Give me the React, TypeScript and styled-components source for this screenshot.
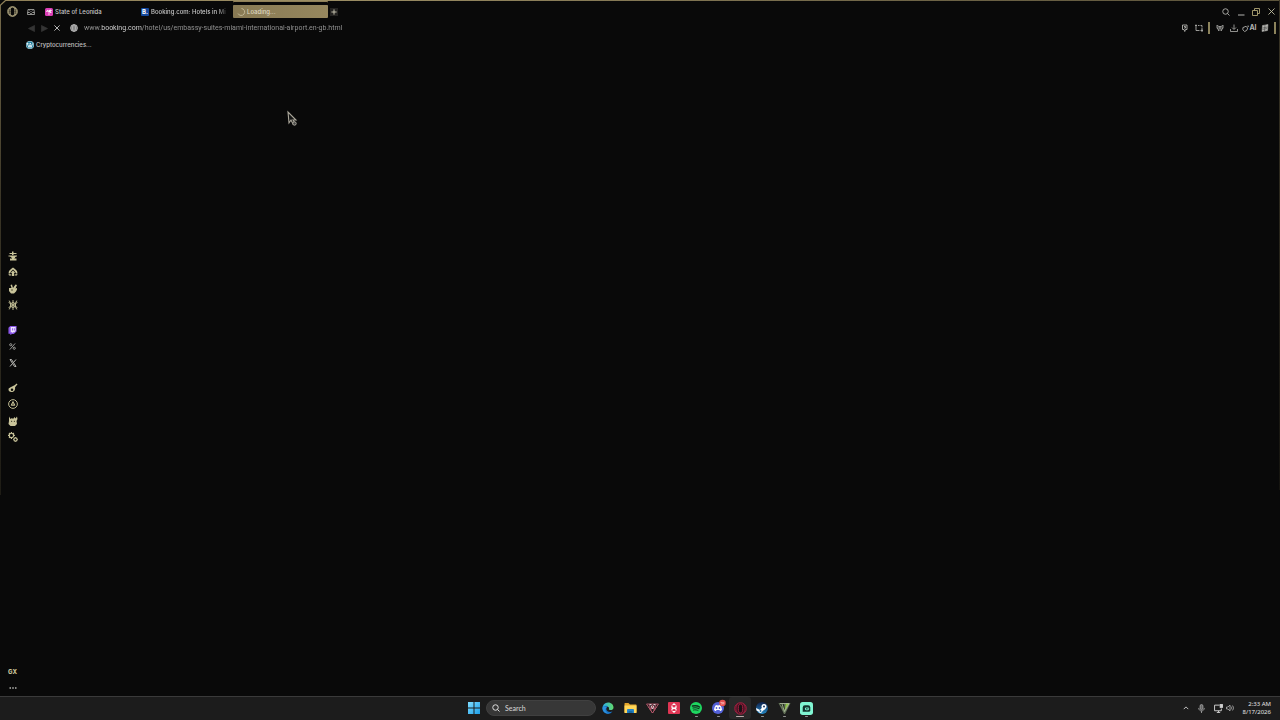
import React from "react";
import styled, { createGlobalStyle, css } from "styled-components";

const gold = "#8f8058";
const cream = "#c9c49a";
const silver = "#b4b4b0";

const GlobalStyle = createGlobalStyle`
  *, *::before, *::after { box-sizing: border-box; }
  html, body { margin: 0; background: #090909; }
  body { font-family: Inter, "Liberation Sans", sans-serif; font-size: 6px; font-weight: 500; line-height: 8px; color: #c8c8c8; }
  button, input { font: inherit; color: inherit; border: 0; padding: 0; margin: 0; background: none; outline-offset: 1px; }
  button { cursor: pointer; }
  svg { display: block; flex: none; overflow: visible; }
`;

const Desktop = styled.div`
  min-height: 100vh;
  display: flex;
  flex-direction: column;
`;

const BrowserWindow = styled.section`
  position: relative;
  flex: 1;
  display: grid;
  grid-template-columns: 25px minmax(0, 1fr);
  background: #090909;
`;

const TopEdge = styled.div`
  position: absolute;
  top: 0;
  left: 5px;
  right: 0;
  height: 1px;
  background: linear-gradient(90deg, #8f8058, #9c8e64 25%, #6f6547 70%, #5c543b);
`;

const LeftEdge = styled.div`
  position: absolute;
  top: 5px;
  left: 0;
  width: 1px;
  height: 490px;
  background: linear-gradient(#766b4b, #3a3526 40%, #1e1c15);
`;

const RightEdge = styled(LeftEdge)`
  top: 0;
  left: auto;
  right: 0;
  background: linear-gradient(#3a3526, #15140f);
`;

const Corner = styled.svg`
  position: absolute;
  top: 0;
  left: 0;
`;

const Sidebar = styled.nav`
  display: grid;
  grid-template-rows: 1fr auto 1fr;
  justify-items: center;
  padding: 5px 0 2px;
`;

const SideApps = styled.div`
  display: flex;
  flex-direction: column;
  gap: 13px;
  padding-bottom: 6px;
`;

const SideGroup = styled.div<{ $short?: boolean }>`
  height: ${(p) => (p.$short ? 45 : 61)}px;
  display: flex;
  flex-direction: column;
  justify-content: space-between;
`;

const SideBottom = styled.div`
  display: flex;
  flex-direction: column;
  gap: 4px;
  align-self: end;
`;

const IconButton = styled.button<{ $tone?: string }>`
  width: 12px;
  height: 12px;
  display: flex;
  align-items: center;
  justify-content: center;
  color: ${(p) => p.$tone ?? silver};
`;

const WideButton = styled(IconButton)`
  width: 15px;
  gap: 0;
  font-size: 7px;
  line-height: 10px;
  font-weight: 700;
`;

const GxButton = styled(IconButton)`
  font-size: 6px;
  font-weight: 800;
`;

const Main = styled.main`
  display: flex;
  flex-direction: column;
  padding-top: 3px;
`;

const TitleBar = styled.header`
  height: 17px;
  display: flex;
  align-items: center;
  padding: 0 3px 0 0;
`;

const TabStrip = styled.div`
  flex: 1;
  min-width: 0;
  display: flex;
  align-items: center;
  gap: 1px;
  margin-left: 4px;
`;

const Tab = styled.button<{ $active?: boolean }>`
  width: 95px;
  height: 13px;
  display: flex;
  align-items: center;
  gap: 2px;
  padding: 0 3px 0 4px;
  border-radius: 1px;
  text-align: left;
  ${(p) =>
    p.$active &&
    css`
      color: #ded8c2;
      background: linear-gradient(90deg, #887a54, #96875e);
      box-shadow: 0 -3px 0 #090909, 0 -4px 0 ${gold};
    `}
`;

const TabTitle = styled.span<{ $fade?: boolean }>`
  flex: 1;
  min-width: 0;
  overflow: hidden;
  white-space: nowrap;
  ${(p) => p.$fade && css`mask-image: linear-gradient(90deg, #000 84%, transparent 100%);`}
`;

const AddTab = styled.button`
  width: 8px;
  height: 8px;
  margin-left: 1px;
  display: grid;
  place-items: center;
  background: #242321;
  color: #d0ccb8;
`;

const Controls = styled.div`
  display: flex;
  gap: 3px;
`;

const Toolbar = styled.div`
  height: 16px;
  display: flex;
  align-items: center;
  padding: 0 2px 0 0;
`;

const NavButtons = styled.div`
  display: flex;
  gap: 1px;
`;

const Address = styled.label`
  flex: 1;
  min-width: 0;
  display: flex;
  align-items: center;
  gap: 6px;
  margin-left: 7px;
`;

const AddressInput = styled.input`
  flex: 1;
  min-width: 0;
  height: 12px;
  font-family: Roboto, "Liberation Sans", sans-serif;
  font-size: 7px;
  font-weight: 400;
  outline: none;
  background: linear-gradient(90deg, #989898 17px, #e0e0e0 17px, #e0e0e0 58px, #989898 58px);
  background-clip: text;
  -webkit-text-fill-color: transparent;
`;

const Tools = styled.div`
  display: flex;
  align-items: center;
  gap: 2px;
`;

const Divider = styled.span`
  width: 2px;
  height: 12px;
  margin: 0 2px 0 1px;
  background: #8c835c;
`;

const Bookmarks = styled.div`
  height: 17px;
  display: flex;
  align-items: center;
  padding-left: 1px;
`;

const Bookmark = styled.a`
  display: flex;
  align-items: center;
  gap: 2px;
  color: #c2c2c2;
  text-decoration: none;
`;

const Taskbar = styled.footer`
  height: 24px;
  flex: none;
  display: grid;
  grid-template-columns: 1fr auto 1fr;
  align-items: center;
  padding-bottom: 1px;
  background: #1c1c1c;
  border-top: 1px solid #3a3a3a;
  font-family: "Noto Sans", "Open Sans", sans-serif;
`;

const TaskItems = styled.div`
  grid-column: 2;
  display: flex;
  align-items: center;
`;

const TaskButton = styled.button<{ $open?: boolean; $active?: boolean }>`
  position: relative;
  width: 22px;
  height: 22px;
  display: grid;
  place-items: center;
  ${(p) =>
    p.$active &&
    css`
      background: #292929;
      border-radius: 3px;
    `}
  ${(p) =>
    p.$open &&
    css`
      &::after {
        content: "";
        position: absolute;
        bottom: 2px;
        left: calc(50% - ${p.$active ? 4 : 1}px);
        width: ${p.$active ? 8 : 3}px;
        height: 1px;
        border-radius: 1px;
        background: ${p.$active ? "#b9a9a9" : "#909090"};
      }
    `}
`;

const SearchBox = styled.label`
  width: 110px;
  height: 16px;
  display: flex;
  align-items: center;
  gap: 5px;
  padding: 0 5px;
  margin: 0 1px;
  border-radius: 8px;
  background: #373737;
  border: 1px solid #404040;
  color: #dedede;
`;

const SearchInput = styled.input`
  flex: 1;
  min-width: 0;
  font-family: Lato, "Noto Sans", sans-serif;
  font-size: 7px;
  outline: none;
  &::placeholder { color: #d0d0d0; opacity: 1; }
`;

const Tray = styled.div`
  display: flex;
  align-items: center;
  justify-content: flex-end;
  padding-right: 9px;
  gap: 3px;
`;

const TrayPair = styled.div`
  display: flex;
  margin-left: 2px;
`;

const Clock = styled.time`
  width: 32px;
  text-align: right;
  font-size: 6px;
  font-weight: 400;
  color: #e4e4e4;
  white-space: nowrap;
`;

const Pointer = styled.svg`
  position: absolute;
  left: 287px;
  top: 111px;
`;

type IconProps = { size?: number; width?: number; children: React.ReactNode };

const Line = ({ size = 8, width = 1.6, children }: IconProps) => (
  <svg width={size} height={size} viewBox="0 0 16 16" fill="none" stroke="currentColor" strokeWidth={width} aria-hidden="true">
    {children}
  </svg>
);

const Solid = ({ size = 10, children }: IconProps) => (
  <svg width={size} height={size} viewBox="0 0 20 20" fill="currentColor" aria-hidden="true">
    {children}
  </svg>
);

const sideTop = [
  { name: "GX Corner", icon: <Solid><path d="M8 1h3v3h6v2h-6v2H8V6H3V4h5z" /><path d="M1 9h17v2c-3 0-4 1-4 3h-1v1h4v4H4v-4h4v-1H7c0-2-2-3-6-3z" /></Solid> },
  { name: "Mods", icon: <Solid><path d="M10 1l4 3 4 4 1 5h-3l-2-4-4-4-4 4-2 4H1l1-5 4-4z" /><path d="M10 7l4 4-2 2v5H8v-5l-2-2zM1 14l6 1v2H2zM19 14l-6 1v2h5z" /></Solid> },
  { name: "Cleaner", icon: <Solid><path d="M5 2l3-1 2 7 5-7 3 1-3 7 3-1v3l-2 4-4 4H6l-4-5V8h5z" /><circle cx="8" cy="12" r="1.500" fill="#3a3825" /></Solid> },
  { name: "Game library", icon: <Line size={10} width={1.5}><path d="M8 0v16M1 4l14 8M15 4L1 12M8 4l4 2v4l-4 2-4-2V6zM2 1l2 4M14 1l-2 4M2 15l2-4M14 15l-2-4" /></Line> },
];

const sideMid = [
  { name: "Twitch", icon: <Solid size={9}><path d="M5 0h14v12l-6 6H9l-4 2v-3H1V4z" fill="#8a55e8" /><path d="M6 2h11v9l-3 3h-3l-2 2v-2H6z" fill="#eee6ff" /><path d="M9 5h2v5H9zM13 5h2v5h-2z" fill="#8a55e8" /></Solid> },
  { name: "Aria", icon: <Line size={7} width={1.9}><path d="M14 1L2 15" /><circle cx="4" cy="4" r="2.500" /><circle cx="12" cy="12" r="2.500" /></Line> },
  { name: "X", icon: <Line size={8} width={2}><path d="M2 1h3l9 14h-3zM14 1L9 7M7 9l-5 6" /></Line> },
];

const sideLow = [
  { name: "Player", icon: <Solid size={10}><path fillRule="evenodd" d="M14 4l3-3 2 2-3 3-2 3c1 5-2 9-7 9-4 0-6-2-6-5 0-4 5-4 7-6zM8 11a2.500 2.500 0 100 5 2.500 2.500 0 000-5z" /></Solid> },
  { name: "History", icon: <Line size={10} width={1.5}><circle cx="8" cy="8" r="7" /><path d="M8 4L5 10h6zM8 6v4" /></Line> },
  { name: "Extensions", icon: <Solid><path d="M2 1l3 5 3-2 2 2 3-4 2 3 3-4 1 5-2 4 1 6-4 4H5l-4-4 1-6z" /><path d="M6 9l3 2-3 1zM14 9l-3 2 3 1z" fill="#3a3825" /></Solid> },
  { name: "Settings", icon: <Line size={10} width={1.9}><circle cx="5.500" cy="5.500" r="3.500" /><path d="M5.500 0v2M5.500 9v2M0 5.500h2M9 5.500h2M1.600 1.600L3 3M9.400 1.600L8 3M1.600 9.400L3 8" /><circle cx="12" cy="12" r="2.600" /><path d="M12 8v1M12 15v1M8 12h1M15 12h1" /></Line> },
];

const SideButtons = ({ items, short, tone }: { items: { name: string; icon: React.ReactNode }[]; short?: boolean; tone: string }) => (
  <SideGroup $short={short}>
    {items.map((i) => (
      <IconButton key={i.name} aria-label={i.name} $tone={tone}>{i.icon}</IconButton>
    ))}
  </SideGroup>
);

const tasks = [
  { name: "Edge", open: false, icon: (
    <svg width="12" height="12" viewBox="0 0 24 24" aria-hidden="true">
      <defs><linearGradient id="edgeTop" x1="0" x2="1"><stop stopColor="#2aa7e6" /><stop offset="1" stopColor="#63dc6a" /></linearGradient></defs>
      <path d="M1 13A11 11 0 0112 1c7 0 11 5 11 10 0 4-3 5-6 5-2 0-4-1-3-3 1-4-5-7-13 0z" fill="url(#edgeTop)" />
      <path d="M1 12c2-5 9-6 11-3-3 1-4 4-3 7 2 4 7 5 12 3A11 11 0 011 12z" fill="#1673c8" />
      <path d="M9 11c-4 3-2 10 4 12-6 0-12-4-12-11 2-3 5-4 8-1z" fill="#2d91dc" />
    </svg>) },
  { name: "File Explorer", open: false, icon: (
    <svg width="13" height="12" viewBox="0 0 26 24" aria-hidden="true">
      <path d="M1 3q0-1 1-1h7l3 3h12q1 0 1 1v15H1z" fill="#e3a52c" /><path d="M1 7h24v14q0 1-1 1H2q-1 0-1-1z" fill="#ffd75a" />
      <path d="M6 22v-6q0-2 2-2h10q2 0 2 2v6z" fill="#2583c7" /><path d="M9 18h8v4H9z" fill="#1769a5" />
    </svg>) },
  { name: "Valorant tracker", open: false, icon: (
    <svg width="13" height="12" viewBox="0 0 26 24" fill="none" stroke="#b5586b" strokeWidth="1.800" aria-hidden="true">
      <path d="M1 4h24L13 22zM6 5l4 10 3-9 3 9 4-10M5 10l8 12 8-12" /><path d="M10 7l3 7 3-7M7 5h4M15 5h4" stroke="#f0d6db" />
    </svg>) },
  { name: "Launcher", open: false, icon: (
    <svg width="12" height="12" viewBox="0 0 24 24" aria-hidden="true">
      <rect width="24" height="24" rx="2" fill="#df3553" />
      <path d="M12 2l4 4H8zM12 22l4-4H8z" fill="#fff" />
      <path d="M8 7v4l4 2 4-2V7M8 17v-3l4-2 4 2v3" fill="none" stroke="#fff" strokeWidth="2.400" />
    </svg>) },
  { name: "Spotify", open: true, icon: (
    <svg width="12" height="12" viewBox="0 0 24 24" fill="none" stroke="#10301c" strokeLinecap="round" aria-hidden="true">
      <circle cx="12" cy="12" r="12" fill="#1ed760" stroke="none" /><path d="M5 8c5-1 10-1 14 2" strokeWidth="2.800" /><path d="M6 12c4-1 8-1 12 1.500" strokeWidth="2.300" /><path d="M7 16c4-1 7 0 9 1" strokeWidth="1.800" />
    </svg>) },
  { name: "Discord", open: true, icon: (
    <svg width="12" height="12" viewBox="0 0 24 24" aria-hidden="true">
      <circle cx="12" cy="12" r="12" fill="#5361d8" /><path d="M7 7l3-1 1 1h2l1-1 3 1c2 3 3 6 3 9-1 1-3 2-4 2l-1-2H9l-1 2c-1 0-3-1-4-2 0-3 1-6 3-9z" fill="#fff" />
      <ellipse cx="9" cy="12" rx="1.700" ry="2" fill="#5361d8" /><ellipse cx="15" cy="12" rx="1.700" ry="2" fill="#5361d8" />
      <circle cx="21" cy="2" r="6.500" fill="#e45050" /><path d="M17 1h3M18 4h2M22 0v5M20 2h5" stroke="#ffd0d0" strokeWidth="1.300" />
    </svg>) },
  { name: "Opera GX", open: true, active: true, icon: (
    <svg width="13" height="13" viewBox="0 0 26 26" fill="none" stroke="#a91f42" aria-hidden="true">
      <circle cx="13" cy="13" r="11.500" strokeWidth="2" fill="#3b1420" /><ellipse cx="13" cy="13" rx="4.500" ry="9" strokeWidth="2" fill="#1b1115" /><path d="M7 4c-4 5-4 13 0 18M19 4c4 5 4 13 0 18" strokeWidth="1.400" />
    </svg>) },
  { name: "Steam", open: true, icon: (
    <svg width="12" height="12" viewBox="0 0 24 24" aria-hidden="true">
      <defs><linearGradient id="steamBg" x1="0" x2="0" y1="0" y2="1"><stop stopColor="#10204a" /><stop offset="1" stopColor="#2387c4" /></linearGradient></defs>
      <circle cx="12" cy="12" r="12" fill="url(#steamBg)" /><path d="M0 12l8 4 6-7 5 5-6 4c-1 5-7 5-8 1l-4-2z" fill="#fff" />
      <circle cx="16" cy="9" r="5" fill="#fff" /><circle cx="16" cy="9" r="2" fill="#1b3764" /><circle cx="9" cy="18" r="2" fill="#2573aa" />
    </svg>) },
  { name: "Vegas", open: true, icon: (
    <svg width="13" height="12" viewBox="0 0 26 24" aria-hidden="true">
      <path d="M1 2h24L14 24h-2z" fill="#65745a" /><path d="M4 4h8l2 13z" fill="#24301e" /><path d="M22 3h-6l-3 15z" fill="#8ec63f" /><path d="M8 4l5 15L22 3M4 3h18" fill="none" stroke="#b5c1a6" strokeWidth="1.500" />
    </svg>) },
  { name: "Streamlabs", open: true, icon: (
    <svg width="13" height="13" viewBox="0 0 24 24" aria-hidden="true">
      <rect width="24" height="24" rx="5" fill="#80f5d2" /><path d="M5 18V10q0-4 4-4h6q4 0 4 4v5q0 3-3 3z" fill="#12332d" /><rect x="9" y="10" width="8" height="5" rx="2.500" fill="#80f5d2" /><path d="M12 11v3M14.500 11v3" stroke="#12332d" strokeWidth="1.300" />
    </svg>) },
];

export default function App() {
  return (
    <Desktop>
      <GlobalStyle />
      <BrowserWindow>
        <TopEdge />
        <LeftEdge />
        <RightEdge />
        <Corner width="6" height="6" viewBox="0 0 6 6" aria-hidden="true"><path d="M0 5.500L5.500 .5" stroke={gold} strokeWidth="1.200" /></Corner>
        <Sidebar aria-label="Sidebar">
          <IconButton aria-label="Opera menu" $tone="#b5ab83">
            <Line size={11} width={1.4}><circle cx="8" cy="8" r="7" /><ellipse cx="8" cy="8" rx="3.500" ry="6.500" /><path d="M5 2a8 8 0 000 12M11 2a8 8 0 010 12" /></Line>
          </IconButton>
          <SideApps>
            <SideButtons items={sideTop} tone={cream} />
            <SideButtons items={sideMid} tone={silver} short />
            <SideButtons items={sideLow} tone={cream} />
          </SideApps>
          <SideBottom>
            <GxButton aria-label="GX" $tone={cream}>GX</GxButton>
            <IconButton aria-label="More"><Line size={8}><path d="M1 8h3M6.500 8h3M12 8h3" strokeWidth="2.600" /></Line></IconButton>
          </SideBottom>
        </Sidebar>
        <Main>
          <TitleBar>
            <IconButton aria-label="Workspaces"><Line size={8} width={1.6}><path d="M2 3h12l1 10H1zM1 9h4l2 2h2l2-2h4M5 5l2 2M11 5L9 7" /></Line></IconButton>
            <TabStrip>
              <Tab>
                <svg width="8" height="8" viewBox="0 0 16 16" aria-hidden="true"><rect width="16" height="16" rx="3" fill="#dc3eb6" /><path d="M8 7v7M8 7C6 4 4 4 3 7c2-1 3-1 5 0zM8 7c0-3 3-4 5-2-2 0-3 0-5 2zM8 7c2-1 4 0 4 3-1-2-2-2-4-3z" stroke="#fff" strokeWidth="1.500" fill="#fff" /></svg>
                <TabTitle>State of Leonida</TabTitle>
              </Tab>
              <Tab>
                <svg width="8" height="8" viewBox="0 0 16 16" aria-hidden="true"><rect width="16" height="16" rx="2" fill="#12479c" /><text x="2" y="12.500" fontSize="12" fontWeight="700" fill="#fff">B.</text></svg>
                <TabTitle $fade>Booking.com: Hotels in Mi</TabTitle>
              </Tab>
              <Tab $active>
                <Line size={8} width={1.8}><path d="M9 1a7 7 0 11-7 10" stroke="#c5bb99" /></Line>
                <TabTitle>Loading...</TabTitle>
              </Tab>
              <AddTab aria-label="New tab"><Line size={6} width={2.4}><path d="M8 1v14M1 8h14" /></Line></AddTab>
            </TabStrip>
            <Controls>
              <IconButton aria-label="Search tabs"><Line size={8} width={1.8}><circle cx="7" cy="7" r="5.500" /><path d="M11 11l4 4" /></Line></IconButton>
              <IconButton aria-label="Minimize"><Line size={8}><path d="M2 14h13" strokeWidth="2" /></Line></IconButton>
              <IconButton aria-label="Restore" $tone="#b0a676"><Line size={8} width={1.8}><path d="M1 5h10v10H1zM5 5V1h10v10h-4" /></Line></IconButton>
              <IconButton aria-label="Close" $tone="#c5c1a4"><Line size={7} width={2}><path d="M1 1l14 14M15 1L1 15" /></Line></IconButton>
            </Controls>
          </TitleBar>
          <Toolbar>
            <NavButtons>
              <IconButton aria-label="Back" $tone="#353535"><Line size={7}><path d="M15 1v14L1 8z" fill="currentColor" /></Line></IconButton>
              <IconButton aria-label="Forward" $tone="#353535"><Line size={7}><path d="M1 1v14l14-7z" fill="currentColor" /></Line></IconButton>
              <IconButton aria-label="Stop" $tone="#c8c8c8"><Line size={6} width={2.4}><path d="M1 1l14 14M15 1L1 15" /></Line></IconButton>
            </NavButtons>
            <Address>
              <Line size={8} width={1.3}><circle cx="8" cy="8" r="7" fill="#666" /><ellipse cx="8" cy="8" rx="3" ry="7" /><path d="M1 8h14M2 4h12M2 12h12" /></Line>
              <AddressInput aria-label="Address" defaultValue="www.booking.com/hotel/us/embassy-suites-miami-international-airport.en-gb.html" />
            </Address>
            <Tools>
              <IconButton aria-label="Pin page"><Line size={8} width={1.8}><path d="M3 2h9v9H9l-1.500 4L6 11H3zM6 5h3v3H6" /></Line></IconButton>
              <IconButton aria-label="Snapshot"><Line size={8} width={1.7}><path d="M0 3h4M6 3h3M11 3h3v3M14 7v4M2 1v12M2 13h7M11 13h5M14 10v6" /></Line></IconButton>
              <Divider />
              <Tools>
                <IconButton aria-label="Extension"><Line size={8} width={1.6}><path d="M2 2v6l3 4M14 2v6l-3 4M2 3l4 2h4l4-2M2 8h12M5 11v3M8 5v9M11 11v3" /></Line></IconButton>
                <IconButton aria-label="Downloads"><Line size={8} width={1.6}><path d="M8 1v9M4 7l4 4 4-4M1 10v5h14v-5" /></Line></IconButton>
                <WideButton aria-label="AI"><Line size={7} width={2}><path d="M9 3L2 6v5l4 4 5-3 2-5zM11 4l3-3M14 4l2-1" /></Line>AI</WideButton>
                <IconButton aria-label="Easy setup"><Line size={8} width={1}><path d="M3 3l11-2-1 12-11 2z" fill="currentColor" /><path d="M8 2l-1 12M3 8l10-2M3 11l9-2" stroke="#333" /></Line></IconButton>
              </Tools>
              <Divider />
            </Tools>
          </Toolbar>
          <Bookmarks>
            <Bookmark href="#cryptocurrencies">
              <svg width="8" height="8" viewBox="0 0 16 16" aria-hidden="true"><circle cx="8" cy="8" r="8" fill="#bfe1eb" /><circle cx="8" cy="8" r="7" fill="#247f9d" /><path d="M2.500 5l3.500 8 2-6 2 6 3-8M2 5h3M7 5h3" fill="none" stroke="#fff" strokeWidth="1.700" /></svg>
              Cryptocurrencies...
            </Bookmark>
          </Bookmarks>
        </Main>
        <Pointer width="11" height="16" viewBox="0 0 11 16" aria-hidden="true">
          <path d="M1 1l1 11 2-3 2 4 2-1-2-3h3z" fill="#171716" stroke="#aaa69a" strokeWidth="1.100" />
          <circle cx="7.500" cy="12.500" r="1.700" fill="#444" stroke="#aaa69a" />
        </Pointer>
      </BrowserWindow>
      <Taskbar>
        <TaskItems>
          <TaskButton aria-label="Start">
            <svg width="12" height="12" viewBox="0 0 24 24" aria-hidden="true">
              <defs><linearGradient id="win" x1="0" y1="0" x2="1" y2="1"><stop stopColor="#80ddff" /><stop offset="1" stopColor="#1b9ee8" /></linearGradient></defs>
              <path d="M0 0h11v11H0zM13 0h11v11H13zM0 13h11v11H0zM13 13h11v11H13z" fill="url(#win)" />
            </svg>
          </TaskButton>
          <SearchBox>
            <Line size={8} width={2}><circle cx="7" cy="7" r="5.500" /><path d="M11 11l4 4" /></Line>
            <SearchInput aria-label="Search" placeholder="Search" />
          </SearchBox>
          {tasks.map((t) => (
            <TaskButton key={t.name} aria-label={t.name} $open={t.open} $active={t.active}>{t.icon}</TaskButton>
          ))}
        </TaskItems>
        <Tray>
          <IconButton aria-label="Hidden icons" $tone="#d0d0d0"><Line size={6} width={2.4}><path d="M2 11l6-6 6 6" /></Line></IconButton>
          <IconButton aria-label="Microphone" $tone="#a5a5a5"><Line size={9} width={1.5}><rect x="5.500" y="1" width="5" height="9" rx="2.500" fill="#666" /><path d="M3 7c0 7 10 7 10 0M8 12v4" /></Line></IconButton>
          <TrayPair>
            <IconButton aria-label="Network" $tone="#d0d0d0"><Line size={9} width={1.7}><path d="M10 2H1v10h12V8M5 15h6M8 12v3" /><rect x="11" y="1" width="4" height="5" fill="currentColor" /></Line></IconButton>
            <IconButton aria-label="Volume" $tone="#b8b8b8"><Line size={8} width={1.5}><path d="M1 6h3l4-4v12l-4-4H1zM10 5c2 1 2 5 0 6M12 3c4 2 4 8 0 10" /></Line></IconButton>
          </TrayPair>
          <Clock>2:33 AM<br />8/17/2026</Clock>
        </Tray>
      </Taskbar>
    </Desktop>
  );
}
